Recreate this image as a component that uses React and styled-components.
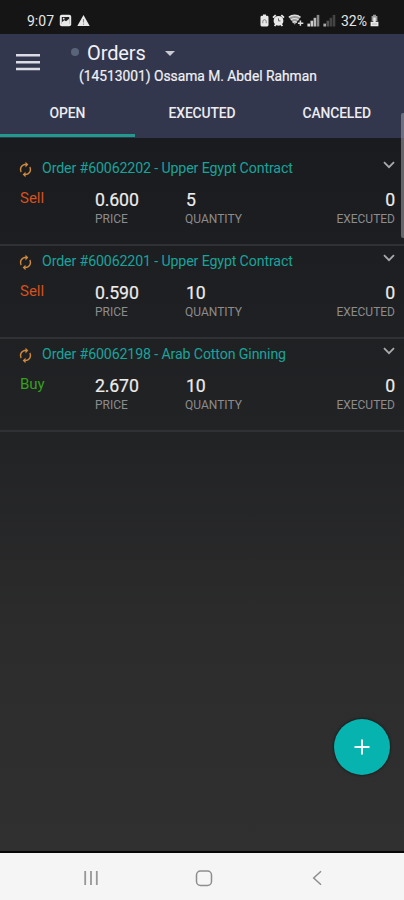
import { useState } from 'react';
import { MdAutorenew } from 'react-icons/md';
import styled, { createGlobalStyle } from 'styled-components';

const GlobalStyle = createGlobalStyle`
  * {
    box-sizing: border-box;
  }
  body {
    margin: 0;
    background: #1b1b1e;
    font-family: Roboto, 'Liberation Sans', sans-serif;
  }
  button {
    border: none;
    background: none;
    padding: 0;
    font-family: inherit;
  }
  svg {
    display: block;
  }
`;

const Screen = styled.div`
  position: relative;
  display: flex;
  flex-direction: column;
  width: 404px;
  height: 900px;
  overflow: hidden;
`;

const StatusBar = styled.div`
  display: flex;
  justify-content: space-between;
  align-items: center;
  height: 34px;
  padding: 7px 25px 0 27px;
  background: #151515;
  color: #e6e6e6;
`;

const StatusGroup = styled.div`
  display: flex;
  align-items: center;
  gap: ${(props) => props.$gap}px;
`;

const StatusText = styled.span`
  margin-left: ${(props) => props.$indent || 0}px;
  font-size: 14px;
  line-height: 14px;
`;

const Header = styled.header`
  height: 104px;
  background: #33374e;
  color: #f1f1f4;
`;

const TitleBar = styled.div`
  display: flex;
  height: 58px;
`;

const MenuButton = styled.button`
  width: 24px;
  height: 18px;
  margin: 19px 0 0 16px;
`;

const Heading = styled.div`
  margin-left: 31px;
  padding-top: 7px;
`;

const TitleLine = styled.div`
  display: flex;
  align-items: center;
  height: 24px;
`;

const StatusDot = styled.span`
  width: 8px;
  height: 8px;
  margin-top: -2px;
  border-radius: 50%;
  background: #59647a;
`;

const Title = styled.h1`
  margin: 0 19px 0 8px;
  font-size: 20px;
  font-weight: 400;
  line-height: 24px;
  letter-spacing: -0.1px;
`;

const Account = styled.div`
  margin-left: 8px;
  font-size: 13.8px;
  line-height: 23px;
  -webkit-text-stroke: 0.2px;
  white-space: nowrap;
`;

const Tabs = styled.nav`
  display: flex;
  height: 45px;
`;

const Tab = styled.button`
  flex: 1;
  color: #ececf0;
  font-size: 13.9px;
  font-weight: 500;
  letter-spacing: -0.15px;
  border-bottom: 3px solid ${(props) => (props.$active ? '#22998f' : 'transparent')};
`;

const Content = styled.main`
  flex: 1;
  padding-top: 15px;
  background: linear-gradient(#1a1b1e, #222325 42%, #2c2c2c 70%, #303030);
  border-bottom: 2px solid #070707;
`;

const OrderRow = styled.section`
  height: 93px;
  padding: 4px 9px 0 17px;
  border-bottom: 2px solid #303134;
`;

const OrderHead = styled.div`
  display: flex;
  align-items: center;
  height: 22px;
`;

const SyncIcon = styled(MdAutorenew)`
  width: 17px;
  height: 17px;
  margin-top: 3px;
  color: #d08a3e;
`;

const OrderName = styled.div`
  flex: 1;
  margin-left: 8px;
  color: #18a49c;
  font-size: 14.2px;
  line-height: 22px;
  letter-spacing: -0.13px;
  white-space: nowrap;
`;

const ExpandButton = styled.button`
  width: 12px;
  height: 8px;
  margin-top: -6px;
`;

const OrderBody = styled.div`
  display: grid;
  grid-template-columns: 78px 90px 1fr 70px;
`;

const Side = styled.div`
  padding: 9px 0 0 3px;
  color: ${(props) => (props.$side === 'Buy' ? '#35a01c' : '#d4521f')};
  font-size: 15px;
  line-height: 20px;
`;

const Field = styled.div`
  text-align: ${(props) => props.$align || 'left'};
`;

const Value = styled.div`
  padding-left: ${(props) => props.$indent || 0}px;
  margin-top: 10px;
  color: #ececec;
  font-size: 17.7px;
  line-height: 22px;
  letter-spacing: -0.15px;
  -webkit-text-stroke: 0.2px;
`;

const Label = styled.div`
  color: #8c8c8e;
  font-size: 12px;
  line-height: 16px;
`;

const ScrollThumb = styled.div`
  position: absolute;
  top: 113px;
  right: 0;
  width: 3px;
  height: 125px;
  border-radius: 2px 0 0 2px;
  background: rgba(150, 150, 155, 0.6);
`;

const AddButton = styled.button`
  position: absolute;
  right: 14px;
  bottom: 125px;
  display: flex;
  align-items: center;
  justify-content: center;
  width: 56px;
  height: 56px;
  border-radius: 50%;
  background: #06b3ae;
  box-shadow: 0 0 3px rgba(0, 0, 0, 0.7);
`;

const NavBar = styled.footer`
  display: grid;
  grid-template-columns: repeat(3, 113px);
  justify-content: center;
  align-items: center;
  justify-items: center;
  height: 47px;
  padding: 3px 0 0 4px;
  background: #f5f5f5;
`;

const ImageIcon = () => (
  <svg width="13" height="13" viewBox="0 0 13 13">
    <rect x="0.8" y="0.8" width="11.4" height="11.4" rx="2" fill="#e8e8e8" />
    <rect x="2.8" y="3" width="7.4" height="7" fill="#222" />
    <path d="M2.8 8.3l2.5-2 1.7 1 3.2-2.6v5.3H2.8z" fill="#e8e8e8" />
    <circle cx="4.7" cy="4.7" r="0.9" fill="#e8e8e8" />
  </svg>
);

const WarningIcon = () => (
  <svg width="13" height="13" viewBox="0 0 13 13">
    <path d="M6.5 1L12.7 12H0.3z" fill="#e8e8e8" />
    <path d="M6.5 5v3.6M6.5 9.5v1.3" stroke="#888" strokeWidth="1.1" />
  </svg>
);

const SaverIcon = () => (
  <svg width="9" height="13" viewBox="0 0 9 13">
    <path d="M3 0.5h3v1.3h1.1a1.4 1.4 0 0 1 1.4 1.4v7.9a1.4 1.4 0 0 1-1.4 1.4H1.9A1.4 1.4 0 0 1 .5 11.1V3.2a1.4 1.4 0 0 1 1.4-1.4H3z" fill="#e8e8e8" />
    <path d="M2.8 9.2V7.4a1.7 1.7 0 0 1 3.4 0v1.8" stroke="#777" strokeWidth="0.9" fill="none" />
  </svg>
);

const AlarmIcon = () => (
  <svg width="13" height="13" viewBox="0 0 13 13">
    <path d="M1 3.7L3.7 1.2M12 3.7L9.3 1.2M2.6 12l1.5-1.8M10.4 12l-1.5-1.8" stroke="#e8e8e8" strokeWidth="1.8" />
    <circle cx="6.5" cy="6.8" r="4.9" fill="#e8e8e8" />
    <path d="M6.5 4.4v2.5h2" stroke="#666" strokeWidth="1" fill="none" />
  </svg>
);

const WifiIcon = () => (
  <svg width="16" height="13" viewBox="0 0 16 13">
    <path d="M0.6 3C4 .3 9.3.3 12.7 3L6.7 10.8z" fill="#999" />
    <path d="M0.8 3.2C4 .6 9.3.6 12.5 3.2M2.8 6c2.2-1.8 5.6-1.8 7.8 0M4.6 8.5c1.3-1 3-1 4.2 0" stroke="#dedede" strokeWidth="1.3" fill="none" />
    <path d="M12.4 6.6v5.2M9.9 9.2h5.4" stroke="#dedede" strokeWidth="1.5" fill="none" />
  </svg>
);

const SignalIcon = ({ colors }) => (
  <svg width="13" height="13" viewBox="0 0 13 13">
    {colors.map((color, i) => (
      <rect key={i} x={0.4 + i * 3.1} y={9.6 - i * 2.9} width="2.6" height={2.9 + i * 2.9} fill={color} />
    ))}
  </svg>
);

const BatteryIcon = () => (
  <svg width="9" height="13" viewBox="0 0 9 13">
    <path d="M3 .8h3v1.3h1.4v5H1.6v-5H3z" fill="#999" />
    <path d="M3.3 3.4h2.4v4.4h2.7v4.4H.6V7.8h2.7z" fill="#eaeaea" />
    <path d="M2 10h5" stroke="#aaa" strokeWidth="0.8" />
  </svg>
);

const MenuIcon = () => (
  <svg width="24" height="18" viewBox="0 0 24 18">
    <path d="M0 2.3h24M0 9.2h24M0 16.1h24" stroke="#dadbe4" strokeWidth="2.5" />
  </svg>
);

const CaretIcon = () => (
  <svg width="10" height="5" viewBox="0 0 10 5">
    <path d="M0 0h10L5 5z" fill="#c9cad2" />
  </svg>
);

const ChevronIcon = () => (
  <svg width="12" height="8" viewBox="0 0 12 8">
    <path d="M1 1.2l5 5 5-5" fill="none" stroke="#a9a9ab" strokeWidth="1.8" />
  </svg>
);

const PlusIcon = () => (
  <svg width="16" height="16" viewBox="0 0 16 16">
    <path d="M8 0.5v15M0.5 8h15" stroke="#f2ffff" strokeWidth="2" />
  </svg>
);

const RecentsIcon = () => (
  <svg width="16" height="16" viewBox="0 0 16 16">
    <path d="M2.2 1v14M8 1v14M13.8 1v14" stroke="#979797" strokeWidth="1.8" />
  </svg>
);

const HomeIcon = () => (
  <svg width="18" height="17" viewBox="0 0 18 17">
    <rect x="1.5" y="1" width="15" height="14.5" rx="4" fill="none" stroke="#8d8d8d" strokeWidth="1.5" />
  </svg>
);

const BackIcon = () => (
  <svg width="10" height="16" viewBox="0 0 10 16">
    <path d="M9 1.2L1.7 8 9 14.8" fill="none" stroke="#8d8d8d" strokeWidth="1.5" />
  </svg>
);

const tabs = ['OPEN', 'EXECUTED', 'CANCELED'];

const orders = [
  { id: '60062202', name: 'Upper Egypt Contract', side: 'Sell', price: '0.600', quantity: 5, executed: 0 },
  { id: '60062201', name: 'Upper Egypt Contract', side: 'Sell', price: '0.590', quantity: 10, executed: 0 },
  { id: '60062198', name: 'Arab Cotton Ginning', side: 'Buy', price: '2.670', quantity: 10, executed: 0 },
];

const Order = ({ order }) => (
  <OrderRow>
    <OrderHead>
      <SyncIcon />
      <OrderName>
        Order #{order.id} - {order.name}
      </OrderName>
      <ExpandButton>
        <ChevronIcon />
      </ExpandButton>
    </OrderHead>
    <OrderBody>
      <Side $side={order.side}>{order.side}</Side>
      <Field>
        <Value>{order.price}</Value>
        <Label>PRICE</Label>
      </Field>
      <Field>
        <Value $indent={1}>{order.quantity}</Value>
        <Label>QUANTITY</Label>
      </Field>
      <Field $align="right">
        <Value>{order.executed}</Value>
        <Label>EXECUTED</Label>
      </Field>
    </OrderBody>
  </OrderRow>
);

const App = () => {
  const [activeTab, setActiveTab] = useState('OPEN');

  return (
    <Screen>
      <GlobalStyle />
      <StatusBar>
        <StatusGroup $gap={5}>
          <StatusText>9:07</StatusText>
          <ImageIcon />
          <WarningIcon />
        </StatusGroup>
        <StatusGroup $gap={3}>
          <SaverIcon />
          <AlarmIcon />
          <WifiIcon />
          <SignalIcon colors={['#ddd', '#ccc', '#bbb', '#888']} />
          <SignalIcon colors={['#aaa', '#555', '#444', '#444']} />
          <StatusText $indent={2}>32%</StatusText>
          <BatteryIcon />
        </StatusGroup>
      </StatusBar>
      <Header>
        <TitleBar>
          <MenuButton>
            <MenuIcon />
          </MenuButton>
          <Heading>
            <TitleLine>
              <StatusDot />
              <Title>Orders</Title>
              <CaretIcon />
            </TitleLine>
            <Account>(14513001) Ossama M. Abdel Rahman</Account>
          </Heading>
        </TitleBar>
        <Tabs>
          {tabs.map((tab) => (
            <Tab key={tab} $active={tab === activeTab} onClick={() => setActiveTab(tab)}>
              {tab}
            </Tab>
          ))}
        </Tabs>
      </Header>
      <Content>
        {orders.map((order) => (
          <Order key={order.id} order={order} />
        ))}
      </Content>
      <ScrollThumb />
      <AddButton>
        <PlusIcon />
      </AddButton>
      <NavBar>
        <RecentsIcon />
        <HomeIcon />
        <BackIcon />
      </NavBar>
    </Screen>
  );
};

export default App;
